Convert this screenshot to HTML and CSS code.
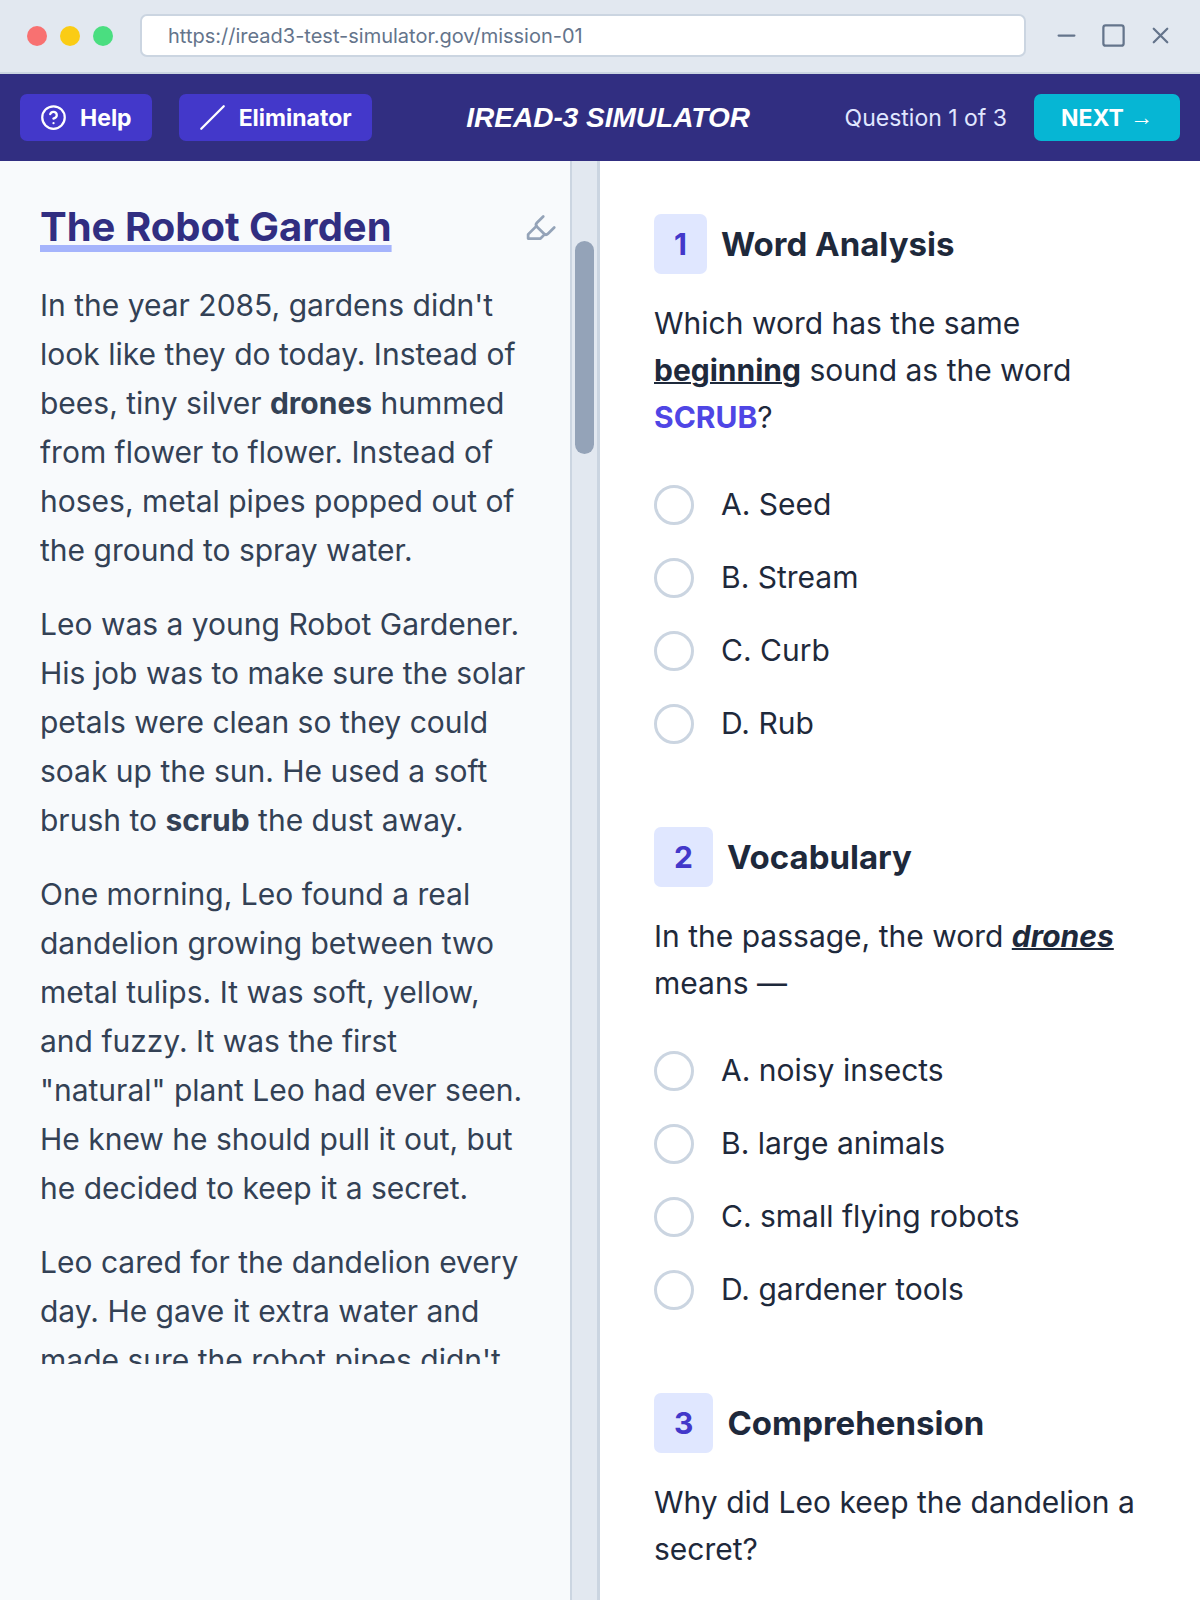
FILE: index.html
```html
<!DOCTYPE html>
<html lang="en">
<head>
<meta charset="utf-8">
<meta name="viewport" content="width=device-width, initial-scale=1">
<title>IREAD-3 Simulator</title>
<link rel="stylesheet" href="styles.css">
</head>
<body class="page">
  <div class="chrome">
    <div class="dots">
      <span class="dot dot-red"></span>
      <span class="dot dot-yellow"></span>
      <span class="dot dot-green"></span>
    </div>
    <input class="address" type="text" aria-label="Address" value="https://iread3-test-simulator.gov/mission-01">
    <div class="window-icons">
      <svg class="icon" viewBox="0 0 24 24"><path d="M5 12h14"/></svg>
      <svg class="icon" viewBox="0 0 24 24"><rect x="3" y="3" width="18" height="18" rx="2"/></svg>
      <svg class="icon" viewBox="0 0 24 24"><path d="M18 6 6 18M6 6l12 12"/></svg>
    </div>
  </div>

  <header class="toolbar">
    <div class="tools">
      <button class="tool" type="button">
        <svg class="icon" viewBox="0 0 24 24"><circle cx="12" cy="12" r="10"/><path d="M9.09 9a3 3 0 0 1 5.83 1c0 2-3 3-3 3M12 17h.01"/></svg>
        Help
      </button>
      <button class="tool" type="button">
        <svg class="icon" viewBox="0 0 24 24"><path d="M22 2 2 22"/></svg>
        Eliminator
      </button>
    </div>
    <h1 class="brand">IREAD-3 SIMULATOR</h1>
    <div class="progress">
      <span class="counter">Question 1 of 3</span>
      <button class="next" type="button">NEXT <span class="arrow">→</span></button>
    </div>
  </header>

  <main class="split">
    <section class="reader">
      <article class="passage">
        <div class="passage-head">
          <h2 class="passage-title">The Robot Garden</h2>
          <button class="highlighter" type="button" aria-label="Highlighter">
            <svg class="icon-large" viewBox="0 0 24 24"><path d="m9 11-6 6v3h9l3-3"/><path d="m22 12-4.6 4.6a2 2 0 0 1-2.8 0l-5.2-5.2a2 2 0 0 1 0-2.8L14 4"/></svg>
          </button>
        </div>
        <div class="passage-text">
          <p>In the year 2085, gardens didn't look like they do today. Instead of bees, tiny silver <strong>drones</strong> hummed from flower to flower. Instead of hoses, metal pipes popped out of the ground to spray water.</p>
          <p>Leo was a young Robot Gardener. His job was to make sure the solar petals were clean so they could soak up the sun. He used a soft brush to <strong>scrub</strong> the dust away.</p>
          <p>One morning, Leo found a real dandelion growing between two metal tulips. It was soft, yellow, and fuzzy. It was the first "natural" plant Leo had ever seen. He knew he should pull it out, but he decided to keep it a secret.</p>
          <p>Leo cared for the dandelion every day. He gave it extra water and made sure the robot pipes didn't</p>
        </div>
      </article>
      <div class="track"><div class="thumb"></div></div>
    </section>

    <section class="questions">
      <fieldset class="question">
        <legend class="question-head"><span class="badge">1</span><span class="skill">Word Analysis</span></legend>
        <p class="prompt">Which word has the same <strong class="underlined">beginning</strong> sound as the word <strong class="target">SCRUB</strong>?</p>
        <div class="options">
          <label class="option"><input class="radio" type="radio" name="q1">A. Seed</label>
          <label class="option"><input class="radio" type="radio" name="q1">B. Stream</label>
          <label class="option"><input class="radio" type="radio" name="q1">C. Curb</label>
          <label class="option"><input class="radio" type="radio" name="q1">D. Rub</label>
        </div>
      </fieldset>
      <fieldset class="question">
        <legend class="question-head"><span class="badge">2</span><span class="skill">Vocabulary</span></legend>
        <p class="prompt">In the passage, the word <strong class="underlined slanted">drones</strong> means —</p>
        <div class="options">
          <label class="option"><input class="radio" type="radio" name="q2">A. noisy insects</label>
          <label class="option"><input class="radio" type="radio" name="q2">B. large animals</label>
          <label class="option"><input class="radio" type="radio" name="q2">C. small flying robots</label>
          <label class="option"><input class="radio" type="radio" name="q2">D. gardener tools</label>
        </div>
      </fieldset>
      <fieldset class="question">
        <legend class="question-head"><span class="badge">3</span><span class="skill">Comprehension</span></legend>
        <p class="prompt">Why did Leo keep the dandelion a secret?</p>
      </fieldset>
    </section>
  </main>
</body>
</html>
```
FILE: styles.css
```css
*, *::before, *::after { box-sizing: border-box; }

.page {
  margin: 0;
  min-height: 100vh;
  display: flex;
  flex-direction: column;
  background: #fff;
  color: #1e293b;
  font-family: Inter, "Liberation Sans", sans-serif;
  font-size: 30px;
}

h1, h2, p { margin: 0; }

button, input { font-family: inherit; }

.icon, .icon-large {
  display: block;
  flex: none;
  width: 27px;
  height: 27px;
  fill: none;
  stroke: currentColor;
  stroke-width: 2;
  stroke-linecap: round;
  stroke-linejoin: round;
}

.icon-large { width: 33px; height: 33px; }

/* Browser frame */
.chrome {
  display: flex;
  align-items: center;
  gap: 27px;
  padding: 14px 26px 15px 27px;
  background: #e2e8f0;
  border-bottom: 2px solid #cbd5e1;
}

.dots { display: flex; gap: 13px; }
.dot { width: 20px; height: 20px; border-radius: 50%; }
.dot-red { background: #f87171; }
.dot-yellow { background: #facc15; }
.dot-green { background: #4ade80; }

.address {
  flex: 1;
  min-width: 0;
  height: 43px;
  padding: 0 26px;
  border: 2px solid #cbd5e1;
  border-radius: 7px;
  background: #fff;
  color: #64748b;
  font-size: 20px;
}

.window-icons { display: flex; gap: 20px; color: #64748b; }

/* Toolbar */
.toolbar {
  display: flex;
  align-items: center;
  justify-content: space-between;
  padding: 20px;
  background: #312e81;
  color: #fff;
}

.tools, .progress { display: flex; align-items: center; gap: 27px; }

.tool, .next {
  display: flex;
  align-items: center;
  gap: 13px;
  height: 47px;
  padding: 0 20px;
  border: 0;
  border-radius: 7px;
  background: #4338ca;
  color: #fff;
  font-size: 23px;
  font-weight: 700;
}

.next { gap: 6px; padding: 0 27px; background: #06b6d4; }

.arrow { font-family: "Liberation Sans", Arial, sans-serif; }

.brand {
  font-family: "Liberation Sans", Arial, sans-serif;
  font-size: 28px;
  font-style: italic;
  font-weight: 700;
  line-height: 47px;
}

.counter { color: #e0e7ff; font-size: 23px; }

/* Two-column workspace */
.split {
  flex: 1;
  display: grid;
  grid-template-columns: 1fr 1fr;
}

.reader {
  display: flex;
  background: #f8fafc;
  border-right: 3px solid #cbd5e1;
}

.passage { flex: 1; padding: 39px 13px 39px 40px; }

.passage-head {
  display: flex;
  align-items: center;
  justify-content: space-between;
}

.passage-title {
  color: #312e81;
  font-size: 40px;
  font-weight: 700;
  line-height: 54px;
  text-decoration: underline;
  text-decoration-color: #a5b4fc;
  text-decoration-thickness: 7px;
}

.highlighter { padding: 0; border: 0; background: none; color: #94a3b8; }

.passage-text {
  display: flex;
  flex-direction: column;
  gap: 25px;
  max-height: 1083px;
  margin-top: 27px;
  padding-right: 27px;
  overflow: hidden;
  color: #334155;
  line-height: 49px;
}

.track {
  flex: none;
  width: 27px;
  padding: 80px 3px;
  background: #e2e8f0;
  border-left: 2px solid #cbd5e1;
}

.thumb { height: 213px; border-radius: 10px; background: #94a3b8; }

.questions {
  display: flex;
  flex-direction: column;
  gap: 80px;
  padding: 53px 54px 0;
}

.question { min-width: 0; margin: 0; padding: 0; border: 0; }

.question-head {
  display: flex;
  align-items: center;
  gap: 14px;
  padding: 0;
  font-weight: 700;
}

.badge {
  padding: 0 20px;
  border-radius: 7px;
  background: #e0e7ff;
  color: #4338ca;
  line-height: 60px;
}

.skill { font-size: 33px; }

.prompt { margin-top: 26px; line-height: 47px; }

.underlined { text-decoration: underline; text-decoration-thickness: 2px; }
.slanted { font-style: italic; }
.target { color: #4f46e5; }

.options {
  display: flex;
  flex-direction: column;
  gap: 26px;
  margin-top: 40px;
}

.option {
  display: flex;
  align-items: center;
  gap: 27px;
  line-height: 47px;
}

.radio {
  appearance: none;
  flex: none;
  width: 40px;
  height: 40px;
  margin: 0;
  border: 3px solid #cbd5e1;
  border-radius: 50%;
  background: #fff;
}

.radio:checked { border-color: #4f46e5; border-width: 12px; }
```
